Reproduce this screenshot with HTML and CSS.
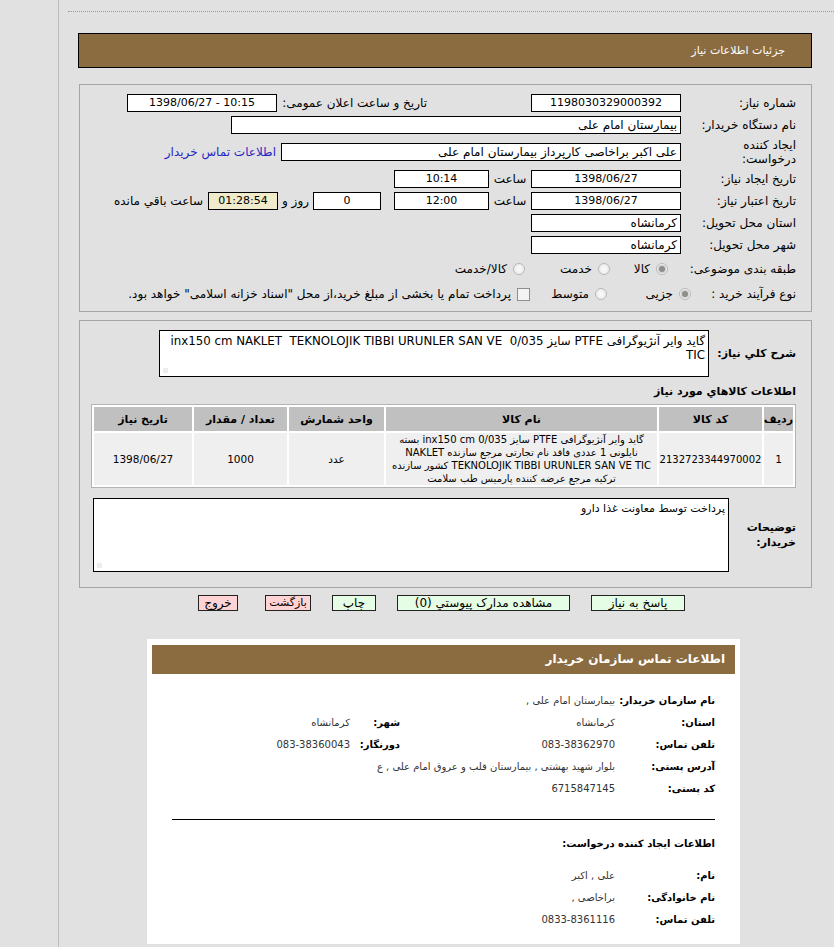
FILE: index.html
```html
<!DOCTYPE html>
<html lang="fa" dir="rtl">
<head>
<meta charset="utf-8">
<title>جزئیات اطلاعات نیاز</title>
<link rel="stylesheet" href="styles.css">
</head>
<body>
<div class="page">
  <div class="dots"></div>
  <div class="content">
    <div class="bar">جزئیات اطلاعات نیاز</div>

    <div class="panel form">
      <div class="row">
        <div class="lbl">شماره نیاز:</div>
        <div class="box w150 c">1198030329000392</div>
        <div class="lbl2">تاریخ و ساعت اعلان عمومی:</div>
        <div class="box w150 c ltr">1398/06/27 - 10:15</div>
      </div>
      <div class="row">
        <div class="lbl">نام دستگاه خریدار:</div>
        <div class="box w450">بیمارستان امام علی</div>
      </div>
      <div class="row tall">
        <div class="lbl two">ایجاد کننده<br>درخواست:</div>
        <div class="box w400">علی اکبر براخاصی کارپرداز بیمارستان امام علی</div>
        <a class="link" href="#">اطلاعات تماس خریدار</a>
      </div>
      <div class="row">
        <div class="lbl">تاریخ ایجاد نیاز:</div>
        <div class="box w150 c">1398/06/27</div>
        <div class="mid">ساعت</div>
        <div class="box w95 c">10:14</div>
      </div>
      <div class="row">
        <div class="lbl">تاریخ اعتبار نیاز:</div>
        <div class="box w150 c">1398/06/27</div>
        <div class="mid">ساعت</div>
        <div class="box w95 c">12:00</div>
        <div class="box w68 c days">0</div>
        <div class="mid2">روز و</div>
        <div class="box w70 c beige">01:28:54</div>
        <div class="rest">ساعت باقي مانده</div>
      </div>
      <div class="row">
        <div class="lbl">استان محل تحویل:</div>
        <div class="box w150">کرمانشاه</div>
      </div>
      <div class="row">
        <div class="lbl">شهر محل تحویل:</div>
        <div class="box w150">کرمانشاه</div>
      </div>
      <div class="row r8">
        <div class="lbl">طبقه بندی موضوعی:</div>
        <div class="opt a1"><span class="radio on"></span><span>کالا</span></div>
        <div class="opt a2"><span class="radio"></span><span>خدمت</span></div>
        <div class="opt"><span class="radio"></span><span>کالا/خدمت</span></div>
      </div>
      <div class="row r9">
        <div class="lbl">نوع فرآیند خرید :</div>
        <div class="opt b1"><span class="radio on"></span><span>جزیی</span></div>
        <div class="opt b2"><span class="radio"></span><span>متوسط</span></div>
        <div class="opt"><span class="check"></span><span>پرداخت تمام یا بخشی از مبلغ خرید،از محل "اسناد خزانه اسلامی" خواهد بود.</span></div>
      </div>
    </div>

    <div class="panel second">
      <div class="drow">
        <div class="blbl">شرح کلي نياز:</div>
        <div class="area desc"><span class="pre">گاید وایر آنژیوگرافی PTFE سایز 0/035  inx150 cm NAKLET  TEKNOLOJIK TIBBI URUNLER SAN VE</span><br>TIC<span class="grip"></span></div>
      </div>
      <div class="title">اطلاعات کالاهاي مورد نياز</div>
      <table class="items">
        <thead>
          <tr>
            <th class="k1">ردیف</th>
            <th class="k2">کد کالا</th>
            <th class="k3">نام کالا</th>
            <th class="k4">واحد شمارش</th>
            <th class="k5">تعداد / مقدار</th>
            <th>تاریخ نیاز</th>
          </tr>
        </thead>
        <tbody>
          <tr>
            <td>1</td>
            <td class="code">2132723344970002</td>
            <td class="name">گاید وایر آنژیوگرافی PTFE سایز 0/035 inx150 cm بسته<br>نایلونی 1 عددی فاقد نام تجارتی مرجع سازنده NAKLET<br>TEKNOLOJIK TIBBI URUNLER SAN VE TIC کشور سازنده<br>ترکیه مرجع عرضه کننده پارمیس طب سلامت</td>
            <td>عدد</td>
            <td>1000</td>
            <td>1398/06/27</td>
          </tr>
        </tbody>
      </table>
      <div class="nrow">
        <div class="blbl two">توضیحات<br>خریدار:</div>
        <div class="area notes">پرداخت توسط معاونت غذا دارو<span class="grip"></span></div>
      </div>
    </div>

    <div class="btns">
      <span class="btn green bw1">پاسخ به نیاز</span>
      <span class="btn green bw2">مشاهده مدارک پیوستي (0)</span>
      <span class="btn green bw3">چاپ</span>
      <span class="btn pink bw4">بازگشت</span>
      <span class="btn pink bw5">خروج</span>
    </div>

    <div class="card">
      <div class="card-head">اطلاعات تماس سازمان خریدار</div>
      <div class="card-body">
        <div class="crow"><div class="cl">نام سازمان خریدار:</div><div class="cv">بیمارستان امام علی ,</div></div>
        <div class="crow"><div class="cl">استان:</div><div class="cv">کرمانشاه</div><div class="cl2">شهر:</div><div class="cv2">کرمانشاه</div></div>
        <div class="crow"><div class="cl">تلفن تماس:</div><div class="cv">083-38362970</div><div class="cl2">دورنگار:</div><div class="cv2">083-38360043</div></div>
        <div class="crow"><div class="cl">آدرس پستی:</div><div class="cv wide">بلوار شهید بهشتی , بیمارستان قلب و عروق امام علی , ع</div></div>
        <div class="crow"><div class="cl">کد پستی:</div><div class="cv">6715847145</div></div>
        <div class="sep"></div>
        <div class="sub">اطلاعات ایجاد کننده درخواست:</div>
        <div class="crow"><div class="cl">نام:</div><div class="cv">علی , اکبر</div></div>
        <div class="crow"><div class="cl">نام خانوادگی:</div><div class="cv">براخاصی ,</div></div>
        <div class="crow"><div class="cl">تلفن تماس:</div><div class="cv">0833-8361116</div></div>
      </div>
    </div>
  </div>
</div>
</body>
</html>
```

FILE: styles.css
```css
* { box-sizing: border-box; }
html, body { margin: 0; padding: 0; }
body {
  background: #e1e1e1;
  font-family: "DejaVu Sans", sans-serif;
  font-size: 12px;
  color: #000;
}
.page {
  margin-left: 58px;
  border-left: 1px solid #bcbcbc;
  min-height: 947px;
  padding: 11px 0 0 9px;
}
.dots { border-top: 1px dotted #9a9a9a; height: 0; }
.content { padding: 21px 22px 0 10px; }

.bar {
  height: 35px;
  background: #8b6c40;
  border: 1px solid #000;
  color: #fff;
  padding-right: 26px;
  line-height: 33px;
  font-size: 11px;
}

.panel {
  border: 1px solid #a5a5a5;
  margin-left: 1px;
}
.form { margin-top: 16px; padding: 7px 15px 5px 10px; }

.row { display: flex; align-items: center; height: 22px; white-space: nowrap; }
.row.tall { height: 32px; }
.row.r8 { height: 26px; }
.row.r9 { height: 24px; }
.lbl { width: 115px; flex: none; }
.lbl.two { line-height: 14px; }
.lbl2 { width: 150px; margin-right: 104px; flex: none; }
.box {
  flex: none;
  height: 18px;
  border: 1px solid #000;
  background: #fff;
  padding: 0 3px;
  line-height: 16px;
  white-space: nowrap;
  overflow: hidden;
}
.c { text-align: center; font-size: 11px; }
.ltr { direction: ltr; }
.w150 { width: 150px; }
.w450 { width: 450px; }
.w400 { width: 400px; }
.w95 { width: 95px; }
.w68 { width: 68px; }
.w70 { width: 70px; }
.days { margin-right: 13px; }
.beige { background: #efebcb; }
.mid { width: 42px; text-align: center; flex: none; }
.mid2 { width: 35px; text-align: center; flex: none; }
.rest { margin-right: 5px; }
.link { color: #2626c4; text-decoration: none; margin-right: 5px; }

.opt { display: flex; align-items: center; flex: none; }
.opt span + span { margin-right: 6px; }
.a1 { width: 71px; padding-right: 13px; }
.a2 { width: 85px; }
.b1 { width: 84px; margin-right: -10px; }
.b2 { width: 77px; }
.radio {
  width: 12px; height: 12px; border-radius: 50%;
  border: 1px solid #b8b8b8;
  background: radial-gradient(circle, #fbfbfb 0%, #e6e6e6 100%);
  position: relative; flex: none;
}
.radio.on::after {
  content: ""; position: absolute; left: 2px; top: 2px;
  width: 6px; height: 6px; border-radius: 50%;
  background: #8e8e8e; box-shadow: 0 0 0 1px #cfcfcf;
}
.check {
  width: 13px; height: 13px; border: 1px solid #8f8f8f;
  background: #f3f3f3; flex: none;
}

.second { margin-top: 8px; padding: 9px 15px 15px 10px; }
.drow, .nrow { display: flex; align-items: center; }
.blbl { font-weight: bold; font-size: 11px; flex: none; }
.drow .blbl { width: 87px; }
.nrow .blbl { width: 67px; line-height: 15px; }
.area {
  position: relative;
  background: #fff;
  border: 1px solid #000;
  padding: 3px 3px;
  line-height: 14px;
  white-space: nowrap;
  overflow: hidden;
}
.pre { white-space: pre; }
.desc { width: 550px; height: 47px; font-size: 11.8px; }
.notes { width: 636px; height: 74px; font-size: 11px; }
.nrow { margin-top: 10px; }
.grip {
  position: absolute; left: 3px; bottom: 3px; width: 5px; height: 5px;
  background: radial-gradient(circle, #c4c4c4 0.5px, transparent 0.8px) 0 0 / 2px 2px;
}

.title { font-weight: bold; font-size: 11px; line-height: 16px; margin-top: 7px; }

.items {
  margin-top: 4px;
  width: 705px;
  border: 1px solid #b3b3b3;
  border-spacing: 2px;
  background: #fff;
  table-layout: fixed;
}
.items th {
  background: #c0c0c0; height: 24px; font-weight: bold; font-size: 11px; padding: 0;
}
.items td {
  background: #efefef; text-align: center; height: 52px; padding: 0; font-size: 10.5px;
}
.items td.code { font-size: 10px; }
.items td.name { font-size: 10px; line-height: 13px; white-space: nowrap; }
.k1 { width: 29px; }
.k2 { width: 103px; }
.k3 { width: 271px; }
.k4 { width: 95px; }
.k5 { width: 93px; }

.btns { display: flex; justify-content: center; margin-top: 7px; gap: 21px; padding-right: 7px; }
.btn {
  height: 16px; line-height: 14px; text-align: center;
  border: 1px solid #222; font-size: 12px; white-space: nowrap; overflow: hidden;
}
.green { background: #e4fde4; }
.pink { background: #ffd3d3; }
.bw1 { width: 94px; }
.bw2 { width: 173px; }
.bw3 { width: 44px; }
.bw4 { width: 46px; font-size: 11px; }
.bw5 { width: 40px; margin-right: 6px; }

.card {
  width: 593px;
  margin: 28px auto 0 69px;
  background: #fff;
  padding: 6px 5px 14px;
}
.card-head {
  background: #8b6c40; height: 29px; line-height: 29px; color: #fff;
  font-weight: bold; font-size: 12px; padding-right: 10px;
}
.card-body { padding: 15px 20px 0; }
.crow { display: flex; align-items: center; height: 22px; white-space: nowrap; }
.cl { width: 100px; font-weight: bold; font-size: 10px; flex: none; }
.cv { width: 215px; color: #333; font-size: 10px; flex: none; }
.cv.wide { width: auto; }
.cl2 { width: 50px; font-weight: bold; font-size: 10px; flex: none; }
.cv2 { color: #333; font-size: 10px; }
.sep { border-top: 1px solid #000; margin: 20px 0 16px; }
.sub { font-weight: bold; font-size: 10px; line-height: 16px; margin-bottom: 12px; }
```
